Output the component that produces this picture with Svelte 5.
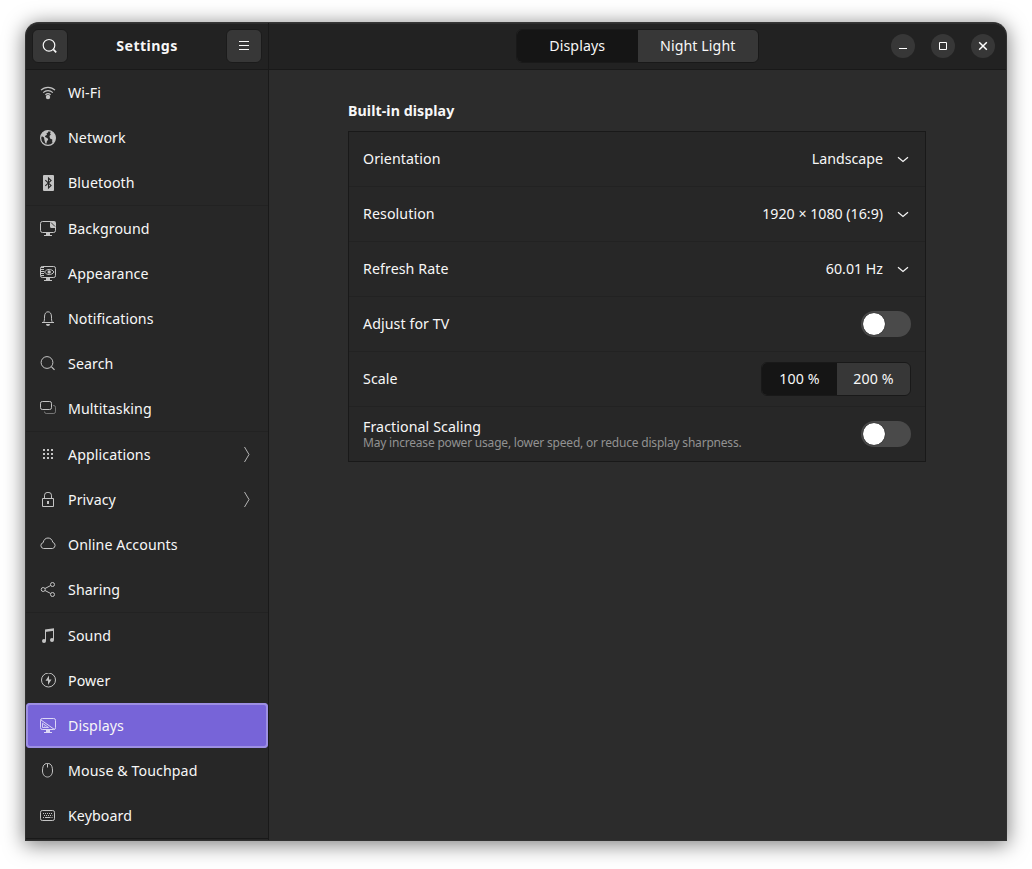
<script lang="ts">
	type Item = { id: string; label: string; more?: boolean };

	const groups: Item[][] = [
		[
			{ id: 'wifi', label: 'Wi-Fi' },
			{ id: 'network', label: 'Network' },
			{ id: 'bluetooth', label: 'Bluetooth' }
		],
		[
			{ id: 'background', label: 'Background' },
			{ id: 'appearance', label: 'Appearance' },
			{ id: 'notifications', label: 'Notifications' },
			{ id: 'search', label: 'Search' },
			{ id: 'multitasking', label: 'Multitasking' }
		],
		[
			{ id: 'applications', label: 'Applications', more: true },
			{ id: 'privacy', label: 'Privacy', more: true },
			{ id: 'accounts', label: 'Online Accounts' },
			{ id: 'sharing', label: 'Sharing' }
		],
		[
			{ id: 'sound', label: 'Sound' },
			{ id: 'power', label: 'Power' },
			{ id: 'displays', label: 'Displays' },
			{ id: 'mouse', label: 'Mouse & Touchpad' },
			{ id: 'keyboard', label: 'Keyboard' }
		]
	];

	const selects = [
		{ label: 'Orientation', value: 'Landscape' },
		{ label: 'Resolution', value: '1920 × 1080 (16:9)' },
		{ label: 'Refresh Rate', value: '60.01 Hz' }
	];

	let panel = $state('displays');
	let tab = $state('Displays');
	let scale = $state('100 %');
	let tv = $state(false);
	let fractional = $state(false);
</script>

{#snippet icon(id: string)}
	<svg class="icon" viewBox="0 0 16 16" width="16" height="16" fill="none" stroke="currentColor">
		{#if id === 'wifi'}
			<path d="M1 5.2C4.8 1.3 11.2 1.3 15 5.2M3.2 7.6c2.7-2.6 6.9-2.6 9.6 0M5.4 9.8c1.500-1.400 3.700-1.400 5.200 0" stroke-width="1.200" />
			<circle cx="8" cy="12" r="2.200" fill="currentColor" stroke="none" />
		{:else if id === 'network'}
			<circle cx="8" cy="8" r="7.400" stroke-width="1.200" />
			<path d="M.8 6.500 2.500 3 5.500.9 8.500.8 8 2.500 6.500 3.200 7 4.800 5 6 5.200 7 7.500 8.200 8.200 9.500 6.800 11.500 6.500 13.500 5.500 13.500 4.500 10.500 4 7.500 2.500 6.500ZM9.500 6 10.800 4.500 10 3.200 11 1.500 13.800 3.500 15.400 7 15 10.500 12.800 13.300 12.200 12 12.300 9.500 10 8.500Z" fill="currentColor" stroke="none" />
		{:else if id === 'bluetooth'}
			<rect x="3" y="0" width="11" height="16" rx="1" fill="currentColor" stroke="none" />
			<path d="m5.300 5.200 5.800 5.300L8.500 13V3l2.600 2.500-5.800 5.300" stroke="#272727" stroke-width="1.100" />
		{:else if id === 'background'}
			<path d="M9.500.5h-7a2 2 0 0 0-2 2v7a2 2 0 0 0 2 2h11a2 2 0 0 0 2-2V6.500" />
			<path d="M9 0h5a2 2 0 0 1 2 2v5h-4.500A1.500 1.500 0 0 1 10 5.500V1H9zM6 12h4v2h2v1H4v-1h2z" fill="currentColor" stroke="none" />
			<path d="m11 1.500 4 4" stroke="#272727" stroke-width=".9" />
		{:else if id === 'appearance'}
			<rect x=".5" y=".5" width="15" height="11" rx="1.800" />
			<path d="M2.500 1v10" stroke-width="3" stroke-dasharray="1 1" />
			<path d="M4.500 6c2.300-3.400 7.200-3.400 9.500 0-2.300 3.400-7.200 3.400-9.500 0z" />
			<circle cx="9.200" cy="6" r="1.700" fill="currentColor" stroke="none" />
			<path d="M6 12h4v2h2v1H4v-1h2z" fill="currentColor" stroke="none" />
		{:else if id === 'notifications'}
			<path d="M2 11.500h12M3.500 11.500c1-1.500 1-3 1-5.500C4.500 2.500 6 .8 8 .8s3.500 1.700 3.500 5.200c0 2.500 0 4 1 5.500" />
			<path d="M6 13h4a2 2 0 0 1-4 0z" fill="currentColor" stroke="none" />
		{:else if id === 'search'}
			<circle cx="7" cy="6.500" r="5.900" />
			<path d="m11.300 10.600 3.200 3.200" stroke-width="1.200" />
		{:else if id === 'multitasking'}
			<rect x=".5" y=".5" width="11" height="8" rx="1.800" />
			<path d="M13 4.500h.7a1.800 1.800 0 0 1 1.800 1.800v4.400a1.800 1.800 0 0 1-1.800 1.800H6.300a1.800 1.800 0 0 1-1.800-1.800V10.500" opacity=".5" />
		{:else if id === 'applications'}
			<path d="M3 3h2M7 3h2M11 3h2M3 7h2M7 7h2M11 7h2M3 11h2M7 11h2M11 11h2" stroke-width="2" />
		{:else if id === 'privacy'}
			<path d="M2.500 6.500h11v8h-11zM4.500 6.500V3.200a3.500 2.900 0 0 1 7 0v3.300" />
			<path d="M7 9h2v3H7z" fill="currentColor" stroke="none" />
		{:else if id === 'accounts'}
			<path d="M3.500 11.500a3 3 0 0 1-.3-5.900C3.600 2.800 5.500 1 8 1s4.200 1.600 4.800 4.300a3.200 3.200 0 0 1-.3 6.200z" />
		{:else if id === 'sharing'}
			<circle cx="3.200" cy="7.500" r="2" /><circle cx="12.500" cy="2.500" r="2" /><circle cx="12.500" cy="12.500" r="2" />
			<path d="m5 6.500 5.700-3M5 8.500l5.700 3" />
		{:else if id === 'sound'}
			<path d="M5.500 13V2.500l8-1V12" />
			<path d="m5 1.500 9-1.300v2.600L5 4z" fill="currentColor" stroke="none" />
			<circle cx="4" cy="13" r="2" fill="currentColor" stroke="none" /><circle cx="12" cy="12" r="2" fill="currentColor" stroke="none" />
		{:else if id === 'power'}
			<circle cx="8.500" cy="7" r="7" />
			<path d="M9 2.500 5.500 7.700H8V12L11.500 6.500H9z" fill="currentColor" stroke="none" />
		{:else if id === 'displays'}
			<rect x=".5" y=".5" width="15" height="11" rx="1.800" />
			<path d="m1 2 13.500 9.500" />
			<path d="M2.500 5.200v4.300h6zM4.300 8.200h1" stroke-width=".9" />
			<path d="M6 12h4v2h2v1H4v-1h2z" fill="currentColor" stroke="none" />
		{:else if id === 'mouse'}
			<path d="M5 1C6.500.2 8.500.2 10 1c2 1 2.500 4 2.500 7s-1.800 6-5 6-5-3-5-6 .5-6 2.500-7zM7.500.500v4" />
		{:else if id === 'keyboard'}
			<rect x=".5" y="2.500" width="14" height="10" rx="1.800" />
			<path d="M3 5.500h9.500M4 7.500h8.500" stroke-dasharray="1 1" /><path d="M5 9.500h5.500M3 9.500h1M11.500 9.500h1" />
		{/if}
	</svg>
{/snippet}

<div class="window">
	<header class="side-header">
		<button class="btn square" aria-label="Search">
			<svg width="16" height="16" viewBox="0 0 16 16" fill="none" stroke="currentColor" stroke-width="1.200"><circle cx="7" cy="7.300" r="5.800" /><path d="m11.300 11.400 2.900 2.900" stroke-width="1.700" /></svg>
		</button>
		<h1>Settings</h1>
		<button class="btn square" aria-label="Menu">
			<svg width="16" height="16" viewBox="0 0 16 16" stroke="currentColor"><path d="M3 3.500h10M3 7.500h10M3 11.500h10" /></svg>
		</button>
	</header>

	<header class="main-header">
		<div class="linked tabs">
			{#each ['Displays', 'Night Light'] as t}
				<button class:checked={tab === t} onclick={() => (tab = t)}>{t}</button>
			{/each}
		</div>
		<div class="controls">
			<button aria-label="Minimize"><svg width="16" height="16" stroke="currentColor"><path d="M4 10.500h8" /></svg></button>
			<button aria-label="Maximize"><svg width="16" height="16" stroke="currentColor" fill="none"><path d="M4.500 4.500h7v7h-7z" /></svg></button>
			<button aria-label="Close"><svg width="16" height="16" stroke="currentColor" stroke-width="1.500"><path d="m4.200 4.200 7.600 7.600M11.800 4.200l-7.600 7.600" /></svg></button>
		</div>
	</header>

	<nav>
		{#each groups as group}
			<div class="group">
				{#each group as item}
					<button class="nav-row" class:selected={panel === item.id} onclick={() => (panel = item.id)}>
						{@render icon(item.id)}
						<span>{item.label}</span>
						{#if item.more}
							<svg class="more" width="16" height="16" fill="none" stroke="currentColor"><path d="M6.500 0 11 7.500 6.500 15" /></svg>
						{/if}
					</button>
				{/each}
			</div>
		{/each}
	</nav>

	<main>
		<h2>Built-in display</h2>
		<div class="list">
			{#each selects as row}
				<div class="row">
					<span>{row.label}</span>
					<span class="value">{row.value}</span>
					<svg class="chevron" width="16" height="16" fill="none" stroke="currentColor" stroke-width="1.200"><path d="m3 6.300 5 4.200 5-4.200" /></svg>
				</div>
			{/each}
			<div class="row">
				<span>Adjust for TV</span>
				<button class="switch" class:on={tv} role="switch" aria-checked={tv} aria-label="Adjust for TV" onclick={() => (tv = !tv)}><i></i></button>
			</div>
			<div class="row">
				<span>Scale</span>
				<div class="linked scale">
					{#each ['100 %', '200 %'] as s}
						<button class:checked={scale === s} onclick={() => (scale = s)}>{s}</button>
					{/each}
				</div>
			</div>
			<div class="row">
				<div class="stack">
					<span>Fractional Scaling</span>
					<small>May increase power usage, lower speed, or reduce display sharpness.</small>
				</div>
				<button class="switch" class:on={fractional} role="switch" aria-checked={fractional} aria-label="Fractional Scaling" onclick={() => (fractional = !fractional)}><i></i></button>
			</div>
		</div>
	</main>
</div>

<style>
	:global(body) { background: #fff; }
	:global(#app) { padding: 22px 25px 28px; height: 819px; overflow: hidden; }
	* { box-sizing: border-box; }
	button { font: inherit; letter-spacing: inherit; color: inherit; border: 0; padding: 0; background: none; }
	svg { display: block; flex: none; }

	.window { width: 982px; height: 819px; display: grid; grid-template: 47px 1fr / 243px 1fr; border: 1px solid #303030; border-top-color: #363636; border-radius: 14px 14px 0 0; background: #2c2c2c; color: #f7f7f7; font: 14.2px/20px "Noto Sans", "Open Sans", sans-serif; letter-spacing: 0.09px; box-shadow: 0 3px 20px 1px rgba(0, 0, 0, 0.5); }

	header { display: flex; align-items: center; background: #222; border-bottom: 1px solid #191919; box-shadow: inset 0 1px #2f2f2f; }
	.side-header { justify-content: space-between; padding: 0 6px; border-right: 1px solid #191919; border-top-left-radius: 13px; }
	h1 { margin: 0; font-size: 14.2px; font-weight: 700; letter-spacing: 0.4px; }
	.btn { display: grid; place-items: center; background: #373737; border: 1px solid #1b1b1b; border-radius: 6px; }
	.square { width: 36px; height: 34px; }
	.main-header { display: grid; grid-template-columns: 247px 243px 1fr; border-top-right-radius: 13px; }
	.linked { display: flex; height: 34px; border: 1px solid #191919; border-radius: 6px; background: #373737; overflow: hidden; }
	.linked button { flex: 1; }
	.linked .checked { background: #151515; }
	.tabs { grid-column: 2; }
	.controls { display: flex; gap: 16px; justify-content: flex-end; padding-right: 11px; }
	.controls button { display: grid; place-items: center; width: 24px; height: 24px; border-radius: 50%; background: #373737; color: #fff; }

	nav { background: #272727; border-right: 1px solid #191919; overflow: hidden; }
	.group { border-bottom: 1px solid #222; }
	.group:last-child { border-color: #191919; }
	.nav-row { display: flex; align-items: center; width: 100%; height: 45px; padding: 0 14px; gap: 12px; text-align: left; }
	.nav-row span { flex: 1; }
	.icon { color: #c4c4c4; }
	.more { color: #b5b5b5; }
	.selected { background: #7764d8; border-radius: 4px; box-shadow: inset 0 0 0 2px #9d8fe3; }
	.selected .icon { color: #ddd8f6; }

	main { padding: 31px 80px 0 79px; }
	h2 { margin: 0 0 10px; font-size: 14.2px; line-height: 20px; font-weight: 700; letter-spacing: 0.08px; }
	.list { width: 578px; border: 1px solid #191919; background: #272727; }
	.row { display: flex; align-items: center; justify-content: space-between; height: 55px; padding: 0 14px; border-bottom: 1px solid #222; }
	.row:last-child { height: 54px; border: 0; }
	.value { margin-left: auto; margin-right: 12px; letter-spacing: 0; }
	.stack { display: flex; flex-direction: column; padding-top: 2px; }
	.stack span { line-height: 16px; }
	small { font-size: 12px; line-height: 16px; letter-spacing: -0.2px; color: #929292; }
	.switch { width: 50px; height: 26px; padding: 1px; border-radius: 13px; background: #4a4a4a; }
	.switch i { display: block; width: 24px; height: 24px; border-radius: 50%; background: #fff; border: 1px solid #414141; background-clip: padding-box; }
	.switch.on { background: #7764d8; }
	.switch.on i { margin-left: 24px; }
	.scale { width: 150px; }
	.scale button:first-child { flex: 0 0 75px; }
</style>
